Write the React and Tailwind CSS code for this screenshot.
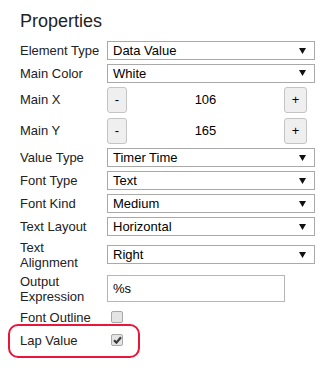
import React from "react";

const font = { fontFamily: '"Liberation Sans", Arial, sans-serif' };

function Arrow() {
  return (
    <svg className="absolute right-[8px] top-1/2 -translate-y-1/2" width="7" height="6" viewBox="0 0 7 6">
      <polygon points="0,0 7,0 3.5,6" fill="#111" />
    </svg>
  );
}

function Select({ value }) {
  return (
    <div className="relative w-[208px] h-[19px] border border-[#a9a9a9] bg-white flex items-center pl-[5px] text-[13px] leading-[15px] text-black">
      {value}
      <Arrow />
    </div>
  );
}

function Btn({ children, w }) {
  return (
    <div className={`${w} h-[26px] rounded-[3px] border border-[#c4c4c4] bg-[#efefef] flex items-center justify-center text-[13px] text-black`}>
      {children}
    </div>
  );
}

function Stepper({ value }) {
  return (
    <div className="w-[200px] flex items-center">
      <Btn w="w-[20px]">-</Btn>
      <div className="flex-1 text-center text-[13px] text-black">{value}</div>
      <Btn w="w-[23px]">+</Btn>
    </div>
  );
}

function Check({ checked }) {
  return (
    <div className="ml-[4px] w-[12px] h-[12px] rounded-[2px] border border-[#a8a8a8] bg-[#e4e4e4] flex items-center justify-center">
      {checked && (
        <svg width="9" height="8" viewBox="0 0 9 8">
          <path d="M1 4.2 L3.4 6.6 L8 1.2" stroke="#3a3a3a" strokeWidth="2.2" fill="none" />
        </svg>
      )}
    </div>
  );
}

function Row({ h, label, children }) {
  return (
    <div className={`${h} flex items-center`}>
      <div className="w-[82px] mr-[5px] text-[13px] leading-[15px] text-[#222]">{label}</div>
      {children}
    </div>
  );
}

export default function App() {
  return (
    <div style={font} className="w-[335px] h-[380px] bg-white pl-[20px] pt-[11px] relative">
      <div className="text-[18px] leading-[20px] text-[#222] h-[20px] mb-[8px]">Properties</div>
      <Row h="h-[23px]" label="Element Type"><Select value="Data Value" /></Row>
      <Row h="h-[22px]" label="Main Color"><Select value="White" /></Row>
      <Row h="h-[31px]" label="Main X"><Stepper value="106" /></Row>
      <Row h="h-[31px]" label="Main Y"><Stepper value="165" /></Row>
      <Row h="h-[23px]" label="Value Type"><Select value="Timer Time" /></Row>
      <Row h="h-[23px]" label="Font Type"><Select value="Text" /></Row>
      <Row h="h-[23px]" label="Font Kind"><Select value="Medium" /></Row>
      <Row h="h-[23px]" label="Text Layout"><Select value="Horizontal" /></Row>
      <Row h="h-[33px]" label="Text Alignment"><Select value="Right" /></Row>
      <Row h="h-[35px]" label="Output Expression">
        <div className="w-[178px] h-[27px] border border-[#b5b5b5] bg-white flex items-center pl-[5px] text-[13px] text-black">%s</div>
      </Row>
      <Row h="h-[22px]" label="Font Outline"><Check /></Row>
      <div className="relative">
        <Row h="h-[24px]" label="Lap Value"><Check checked /></Row>
        <div className="absolute left-[-12px] top-[-4px] w-[132px] h-[34px] rounded-[10px] border-2 border-[#e8163a]" />
      </div>
    </div>
  );
}
